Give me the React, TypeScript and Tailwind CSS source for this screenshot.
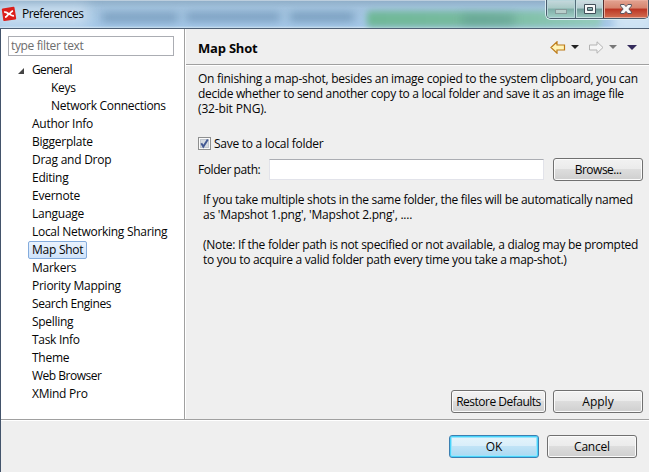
import React from "react";

const items: { label: string; track?: string }[] = [
  { label: "Author Info" },
  { label: "Biggerplate" },
  { label: "Drag and Drop" },
  { label: "Editing" },
  { label: "Evernote" },
  { label: "Language" },
  { label: "Local Networking Sharing", track: "tracking-[-0.29px]" },
  { label: "Map Shot" },
  { label: "Markers" },
  { label: "Priority Mapping" },
  { label: "Search Engines", track: "tracking-[-0.38px]" },
  { label: "Spelling", track: "tracking-[-0.3px]" },
  { label: "Task Info", track: "tracking-[-0.3px]" },
  { label: "Theme" },
  { label: "Web Browser", track: "tracking-[-0.5px]" },
  { label: "XMind Pro" },
];

function PushButton({ label, className = "", primary = false }: { label: string; className?: string; primary?: boolean }) {
  const look = primary
    ? "border-[#3c7fb1] shadow-[inset_0_0_0_1px_#48d4fb,inset_0_0_0_2px_#9be5fc] bg-[linear-gradient(#e5f4fb_0%,#d9eefa_48%,#c0e3f6_50%,#a9d9f2_100%)]"
    : "border-[#707070] shadow-[inset_0_0_0_1px_#fbfbfb] bg-[linear-gradient(#f2f2f2_0%,#ebebeb_48%,#dddddd_50%,#cfcfcf_100%)]";
  return (
    <button className={`flex h-[23px] shrink-0 items-center justify-center rounded-[3px] border whitespace-nowrap ${look} ${className}`}>
      {label}
    </button>
  );
}

function TitleBar() {
  return (
    <header className="relative flex h-[29px] shrink-0 items-start overflow-hidden border-b border-[#4e6075] bg-[linear-gradient(#e8edf2_0px,#90afc9_1px,#a3c3de_8px,#a5c8e8_26px,#d3e5f2_28px)]">
      <div className="absolute top-[13px] left-[102px] h-[9px] w-[76px] bg-[#5d83a6]/60 blur-[4px]" />
      <div className="absolute top-[13px] left-[186px] h-[8px] w-[94px] bg-[#587fa3]/60 blur-[4px]" />
      <div className="absolute top-[13px] left-[290px] h-[8px] w-[64px] bg-[#587fa3]/65 blur-[4px]" />
      <div className="absolute top-[11px] left-[367px] h-[16px] w-[234px] rounded-[4px] bg-[linear-gradient(90deg,#6fb897_0%,#78bba0_50%,#93cbbb_100%)] blur-[3px]" />
      <div className="absolute top-[15px] left-[462px] h-[9px] w-[52px] bg-[#568f8c]/50 blur-[4px]" />
      <div className="absolute top-[9px] left-[614px] h-6 w-[40px] bg-[#cfe3f4] blur-[5px]" />
      <div className="absolute top-[5px] -left-1 h-5 w-[92px] bg-[#e0edf7]/65 blur-[7px]" />
      <svg className="relative mt-[6px] ml-[1px] h-[16px] w-[16px] shrink-0" viewBox="0 0 16 16">
        <path d="M.8 3.600Q.7 2.600 1.700 2.400L12.400.800Q13.400.700 13.500 1.700L15.200 12.200Q15.300 13.200 14.300 13.400L3.500 15.100Q2.500 15.200 2.300 14.200Z" fill="#dc1f1b" />
        <path d="M3.100 6.200C5.800 5.400 6.200 7.500 8 8 9.800 8.500 10.400 10.300 13 9.700M4 11.200C6.500 10.800 6 8.700 8 8 9.900 7.400 9.600 5.400 12 4.800" fill="none" stroke="#fff" strokeWidth="1.8" />
      </svg>
      <h1 className="relative mt-[5px] ml-[5px] text-[12px] leading-[18px] tracking-[-0.5px]">Preferences</h1>
      <div className="relative ml-auto flex h-[19px] w-[103px] shrink-0 overflow-hidden rounded-b-[5px] border border-t-0 border-[#485b6b] shadow-[0_0_0_1px_#d9edf2]">
        <button className="flex w-7 items-center justify-center bg-[linear-gradient(#c6d9de_0%,#a9c9c6_45%,#7eada7_50%,#a2d0c7_100%)] shadow-[inset_0_0_0_1px_#b9d6da]">
          <svg className="mt-[5px] h-[5px] w-3" viewBox="0 0 12 5"><rect x=".5" y=".5" width="11" height="4" fill="#b8cecb" stroke="#869b9b" /></svg>
        </button>
        <button className="flex w-7 items-center justify-center border-l border-[#536c79] bg-[linear-gradient(#d1dde4_0%,#b3cccf_45%,#719c99_50%,#9bc8bf_100%)] shadow-[inset_0_0_0_1px_#c7dfe0]">
          <svg className="-mt-px h-[10px] w-3" viewBox="0 0 12 10"><path d="M.5.5h11v9H.5zM3.500 3.500h5v3h-5z" fill="#f7f9f9" fillRule="evenodd" stroke="#414e59" /></svg>
        </button>
        <button className="flex flex-1 items-center justify-center border-l border-[#572f2f] bg-[linear-gradient(#e2a391_0%,#d6846e_45%,#bb3422_50%,#d27051_100%)] shadow-[inset_0_0_0_1px_#e8ad9d]">
          <svg className="-mt-px h-[10px] w-[12px]" viewBox="0 0 12 10"><path d="M.6.500h3.600L6 2.600 7.800.500h3.600v1.600L8.800 5l2.600 2.900v1.600H7.800L6 7.400 4.200 9.500H.6V7.900L3.200 5 .6 2.100z" fill="#f8f8f8" stroke="#4b4c58" strokeWidth=".9" /></svg>
        </button>
      </div>
    </header>
  );
}

function Triangle({ color, wide = false }: { color: string; wide?: boolean }) {
  return wide ? (
    <svg className="block h-[5px] w-[10px]" viewBox="0 0 10 5"><path d="M0 0h10L5 5z" fill={color} /></svg>
  ) : (
    <svg className="block h-[4px] w-[8px]" viewBox="0 0 8 4"><path d="M0 0h8L4 4z" fill={color} /></svg>
  );
}

export default function App() {
  return (
    <div className="flex h-[472px] w-[649px] flex-col overflow-hidden bg-[#efefef] font-['Open_Sans','Noto_Sans',sans-serif] text-[12px] leading-[15px] text-[#050505]">
      <TitleBar />
      <div className="flex min-h-0 flex-1 flex-col border-l border-[#43546b]">
        <div className="flex h-[391px] shrink-0 border-b border-[#a0a0a0]">
          <aside className="w-[184px] shrink-0 border-r border-[#a0a0a0] bg-white">
            <input
              className="mt-[7px] ml-[7px] block h-[20px] w-[166px] border border-[#abadb3] bg-white pb-px pl-[2px] tracking-[-0.36px] outline-none placeholder:text-[#6d6d6d]"
              placeholder="type filter text"
            />
            <nav className="mt-[5px] leading-[18px] tracking-[-0.25px] whitespace-nowrap">
              <div className="flex h-[18px] items-center pl-[17px]">
                <svg className="mt-[2px] mr-[8px] h-[6px] w-[6px]" viewBox="0 0 6 6"><path d="M6 0v6H0z" fill="#444" /></svg>
                <span className="tracking-[-0.6px]">General</span>
              </div>
              <div className="h-[18px] pl-[50px]">Keys</div>
              <div className="h-[18px] pl-[50px] tracking-[-0.3px]">Network Connections</div>
              {items.map(({ label, track = "" }) =>
                label === "Map Shot" ? (
                  <div key={label} className="ml-[27px] flex h-[18px] w-[59px] items-center rounded-[2px] border border-[#84acdd] bg-[linear-gradient(#e9f2fd,#cfe3fb)] pl-[3px]">
                    {label}
                  </div>
                ) : (
                  <div key={label} className={`h-[18px] pl-[31px] ${track}`}>{label}</div>
                )
              )}
            </nav>
          </aside>
          <main className="flex min-w-0 flex-1 flex-col border-l border-white">
            <div className="flex h-[36px] shrink-0 items-center border-b border-[#a0a0a0] pl-[12px]">
              <h2 className="mt-[3px] text-[13px] font-bold tracking-[-0.2px]">Map Shot</h2>
              <div className="mt-[1px] mr-[12px] ml-auto flex items-center">
                <svg className="h-[13px] w-[16px]" viewBox="0 0 16 13"><path d="M1 6.500L7 .8V4h7.500v5H7v3.200z" fill="#fff4b8" stroke="#bd7b18" strokeWidth="1.2" /></svg>
                <span className="ml-[5px]"><Triangle color="#222" /></span>
                <svg className="ml-[9px] h-[13px] w-[16px]" viewBox="0 0 16 13"><path d="M15 6.500L9 .8V4H1.500v5H9v3.200z" fill="#f6f6f6" stroke="#b3b3b3" /></svg>
                <span className="ml-[5px]"><Triangle color="#777" /></span>
                <span className="ml-[10px]"><Triangle wide color="#342b5b" /></span>
              </div>
            </div>
            <div className="flex flex-1 flex-col border-t border-white pl-[12px] whitespace-nowrap">
              <div className="mt-[5px]">
                <p className="tracking-[-0.27px]">On finishing a map-shot, besides an image copied to the system clipboard, you can</p>
                <p className="tracking-[-0.31px]">decide whether to send another copy to a local folder and save it as an image file</p>
                <p className="tracking-[-0.15px]">(32-bit PNG).</p>
              </div>
              <label className="mt-[19px] flex h-[16px] items-center tracking-[-0.28px]">
                <svg className="mr-[3px] h-[13px] w-[13px]" viewBox="0 0 13 13">
                  <rect x=".5" y=".5" width="12" height="12" fill="#fafafa" stroke="#8e8f8f" />
                  <rect x="2.500" y="2.500" width="8" height="8" fill="#d7dce2" stroke="#c1c7cf" />
                  <path d="M3.300 6.300l2 3.300L9.800 2.500" fill="none" stroke="#435993" strokeWidth="1.900" />
                </svg>
                Save to a local folder
              </label>
              <div className="mt-[7px] flex h-[23px] items-center">
                <span className="w-[71px] tracking-[-0.42px]">Folder path:</span>
                <input className="h-[21px] w-[275px] border border-[#e2e3ea] border-t-[#abadb3] bg-white outline-none" />
                <PushButton label="Browse..." className="ml-[9px] w-[90px] tracking-[-0.5px]" />
              </div>
              <div className="mt-[11px] ml-[5px] tracking-[-0.3px]">
                <p>If you take multiple shots in the same folder, the files will be automatically named</p>
                <p className="tracking-[-0.23px]">as 'Mapshot 1.png', 'Mapshot 2.png', ....</p>
                <p className="mt-[15px]">(Note: If the folder path is not specified or not available, a dialog may be prompted</p>
                <p>to you to acquire a valid folder path every time you take a map-shot.)</p>
              </div>
              <div className="mt-auto mr-[6px] mb-[6px] flex justify-end gap-[7px]">
                <PushButton label="Restore Defaults" className="w-[95px] tracking-[-0.5px]" />
                <PushButton label="Apply" className="w-[90px]" />
              </div>
            </div>
          </main>
        </div>
        <footer className="flex flex-1 items-start justify-end gap-[8px] border-t border-white pt-[14px] pr-[12px]">
          <PushButton primary label="OK" className="w-[90px]" />
          <PushButton label="Cancel" className="w-[90px] tracking-[-0.2px]" />
        </footer>
      </div>
    </div>
  );
}
